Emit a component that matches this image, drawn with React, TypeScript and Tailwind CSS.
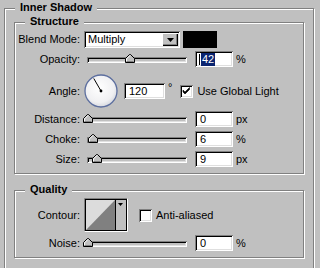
import React from "react";

const sunken =
  "shadow-[inset_1px_1px_0_#808080,inset_-1px_-1px_0_#ffffff,inset_2px_2px_0_#000000,inset_-2px_-2px_0_#dfdfdf]";
const etched =
  "border border-[#808080] shadow-[inset_1px_1px_0_#ffffff,1px_1px_0_#ffffff]";

function Thumb({ className }: { className: string }) {
  return (
    <svg width="10" height="9" viewBox="0 0 10 9" className={className}>
      <path d="M0.5 8.5 V4.5 L4.5 0.5 H5.5 L9.5 4.5 V8.5 Z" fill="#c0c0c0" stroke="#000" />
      <path d="M1.5 7.5 V4.9 L4.9 1.5" fill="none" stroke="#fff" />
      <path d="M1.5 7.5 H8.5" fill="none" stroke="#808080" />
    </svg>
  );
}

function Slider({ thumb }: { thumb: string }) {
  return (
    <div className="relative w-[108px] h-[16px] ml-[3px]">
      <div className={`ml-[4px] mt-[6px] w-[100px] h-[6px] bg-[#c0c0c0] ${sunken}`} />
      <Thumb className={`absolute top-[3px] ${thumb}`} />
    </div>
  );
}

function Field({ children, w = "w-[38px]" }: { children: React.ReactNode; w?: string }) {
  return (
    <div className={`h-[16px] ${w} bg-white ${sunken} flex items-center pl-[5px]`}>{children}</div>
  );
}

function Label({ children }: { children: React.ReactNode }) {
  return <div className="w-[65px] text-right shrink-0">{children}</div>;
}

function SliderRow({
  label,
  value,
  unit,
  thumb,
  className,
}: {
  label: string;
  value: React.ReactNode;
  unit: string;
  thumb: string;
  className: string;
}) {
  return (
    <div className={`flex items-center h-[16px] ${className}`}>
      <Label>{label}</Label>
      <Slider thumb={thumb} />
      <div className="ml-[4px]">
        <Field>{value}</Field>
      </div>
      <div className="ml-[3px]">{unit}</div>
    </div>
  );
}

function Checkbox({ checked }: { checked: boolean }) {
  return (
    <div className={`w-[13px] h-[13px] bg-white ${sunken} relative shrink-0`}>
      {checked && (
        <svg width="13" height="13" viewBox="0 0 13 13" className="absolute left-0 top-0">
          <path d="M3 5 L5 7 L9.5 2.5 V4.5 L5 9 L3 7 Z" fill="#000" stroke="#000" strokeWidth="0.6" />
        </svg>
      )}
    </div>
  );
}

function Dial() {
  const a = (120 * Math.PI) / 180;
  const x = 17 + 14.5 * Math.cos(a);
  const y = 17 - 14.5 * Math.sin(a);
  return (
    <svg width="34" height="34" viewBox="0 0 34 34">
      <defs>
        <radialGradient id="dg" cx="45%" cy="40%" r="65%">
          <stop offset="0%" stopColor="#ffffff" />
          <stop offset="70%" stopColor="#f0f0f2" />
          <stop offset="100%" stopColor="#cfd2da" />
        </radialGradient>
      </defs>
      <circle cx="17" cy="17" r="16" fill="url(#dg)" stroke="#5d6f9f" strokeWidth="1.3" />
      <line x1="17" y1="17" x2={x} y2={y} stroke="#000" strokeWidth="1" />
      <circle cx="17" cy="17" r="1.4" fill="#000" />
    </svg>
  );
}

function Contour() {
  return (
    <svg width="44" height="34" viewBox="0 0 44 34">
      <rect x="0" y="0" width="44" height="34" fill="#c0c0c0" />
      <path d="M0.5 33.5 V0.5 H43.5" fill="none" stroke="#808080" />
      <path d="M0.5 33.5 H43.5 V0.5" fill="none" stroke="#ffffff" />
      <rect x="1.5" y="1.5" width="41" height="31" fill="#dcdcdc" stroke="#000" />
      <path d="M2 32 L31 2 V32 Z" fill="#808080" />
      <rect x="31.5" y="2" width="10.5" height="30" fill="#c0c0c0" />
      <line x1="31.5" y1="2" x2="31.5" y2="32" stroke="#000" />
      <path d="M34 5 H39 L36.5 8 Z" fill="#000" />
    </svg>
  );
}

export default function App() {
  return (
    <div className="w-[320px] h-[268px] overflow-hidden bg-[#c0c0c0] pt-[8px] pl-[4px] text-black text-[11px] leading-[13px] font-['Liberation_Sans',Arial,sans-serif]">
      <div className={`w-[310px] h-[300px] ${etched} pl-[9px] flex flex-col`}>
        <div className="-mt-[8px] ml-[1px] self-start bg-[#c0c0c0] px-[5px] font-bold">Inner Shadow</div>

        <div className={`mt-[8px] w-[290px] ${etched} flex flex-col pb-[6px]`}>
          <div className="-mt-[8px] ml-[10px] self-start bg-[#c0c0c0] px-[5px] font-bold">Structure</div>

          <div className="mt-[3px] flex items-center h-[17px]">
            <Label>Blend Mode:</Label>
            <div className={`ml-[4px] w-[96px] h-[17px] bg-white ${sunken} flex items-center pl-[4px] pr-[2px]`}>
              <span className="flex-1">Multiply</span>
              <div className="w-[16px] h-[13px] bg-[#c0c0c0] shadow-[inset_1px_1px_0_#ffffff,inset_-1px_-1px_0_#000000,inset_-2px_-2px_0_#808080] flex items-center justify-center">
                <svg width="7" height="4" viewBox="0 0 7 4">
                  <path d="M0 0 H7 L3.5 4 Z" fill="#000" />
                </svg>
              </div>
            </div>
            <div className="ml-[3px] w-[34px] h-[17px] bg-black" />
          </div>

          <SliderRow
            className="mt-[3px]"
            label="Opacity:"
            thumb="left-[42px]"
            unit="%"
            value={
              <span className="flex items-center -ml-[1px]">
                <span className="w-[1px] h-[11px] bg-black" />
                <span className="ml-[1px] bg-[#0a2470] text-white px-[1px]">42</span>
              </span>
            }
          />

          <div className="mt-[7px] flex items-center h-[34px]">
            <Label>Angle:</Label>
            <div className="ml-[4px]">
              <Dial />
            </div>
            <div className="ml-[6px]">
              <Field w="w-[41px]">120</Field>
            </div>
            <div className="ml-[3px] self-start mt-[7px]">°</div>
            <div className="ml-[8px]">
              <Checkbox checked />
            </div>
            <div className="ml-[4px]">Use Global Light</div>
          </div>

          <SliderRow className="mt-[3px]" label="Distance:" thumb="left-[0px]" unit="px" value="0" />
          <SliderRow className="mt-[4px]" label="Choke:" thumb="left-[5px]" unit="%" value="6" />
          <SliderRow className="mt-[4px]" label="Size:" thumb="left-[9px]" unit="px" value="9" />
        </div>

        <div className={`mt-[16px] w-[290px] ${etched} flex flex-col pb-[6px]`}>
          <div className="-mt-[8px] ml-[10px] self-start bg-[#c0c0c0] px-[5px] font-bold">Quality</div>

          <div className="mt-[2px] flex items-center h-[34px]">
            <Label>Contour:</Label>
            <div className="ml-[4px]">
              <Contour />
            </div>
            <div className="ml-[11px]">
              <Checkbox checked={false} />
            </div>
            <div className="ml-[4px]">Anti-aliased</div>
          </div>

          <SliderRow className="mt-[3px]" label="Noise:" thumb="left-[0px]" unit="%" value="0" />
        </div>
      </div>
    </div>
  );
}
